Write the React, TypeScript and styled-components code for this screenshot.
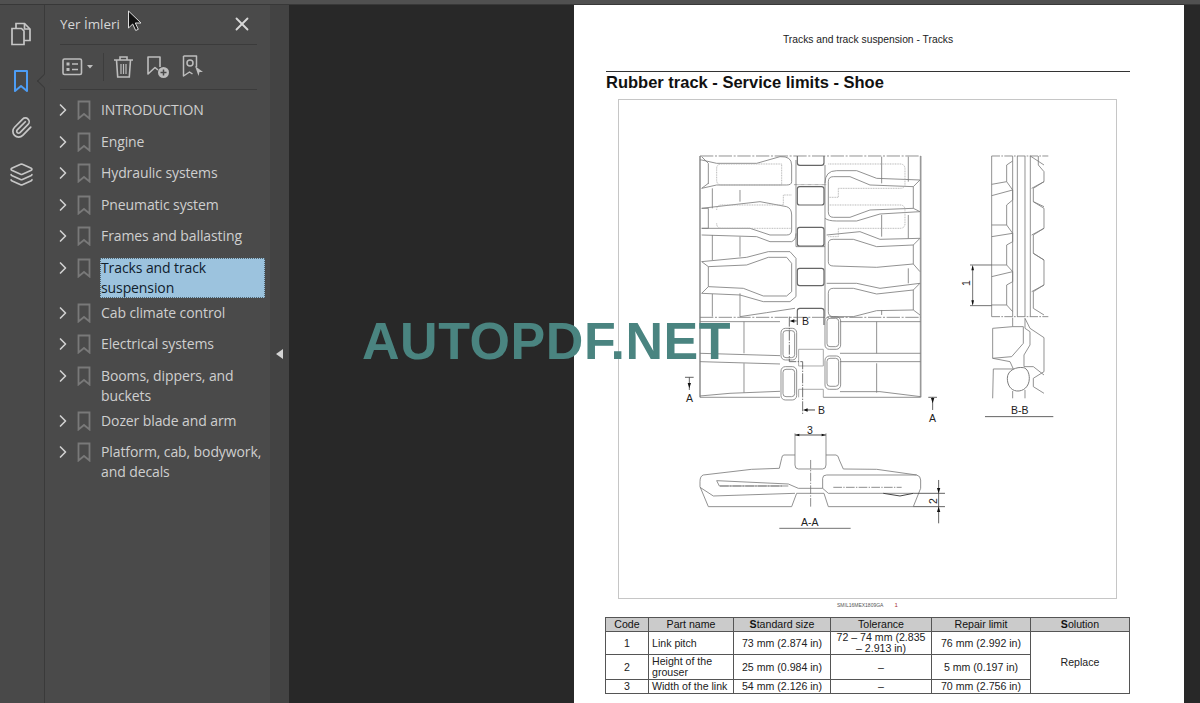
import React from 'react'
import styled, { createGlobalStyle } from 'styled-components'
import { ChevronRight, Layers, Paperclip, X } from 'lucide-react'

const bookmarks = [
  'INTRODUCTION',
  'Engine',
  'Hydraulic systems',
  'Pneumatic system',
  'Frames and ballasting',
  'Tracks and track suspension',
  'Cab climate control',
  'Electrical systems',
  'Booms, dippers, and buckets',
  'Dozer blade and arm',
  'Platform, cab, bodywork, and decals',
]

const limits = [
  { code: '1', name: 'Link pitch', std: '73 mm (2.874 in)', tol: '72 – 74 mm (2.835 – 2.913 in)', rep: '76 mm (2.992 in)', h: 23 },
  { code: '2', name: 'Height of the grouser', std: '25 mm (0.984 in)', tol: '–', rep: '5 mm (0.197 in)', h: 25 },
  { code: '3', name: 'Width of the link', std: '54 mm (2.126 in)', tol: '–', rep: '70 mm (2.756 in)', h: 14 },
]

const GlobalStyle = createGlobalStyle`
  html, body { margin: 0; padding: 0; height: 100%; overflow: hidden; background: #282828; }
  #root { height: 100%; }
`

const Shell = styled.div`
  position: relative;
  height: 703px;
  display: flex;
  flex-direction: column;
  overflow: hidden;
  font-family: "Open Sans", "Noto Sans", sans-serif;
`

const TopStrip = styled.div`
  flex: 0 0 auto;
  height: 4px;
  background: #505050;
  border-bottom: 1px solid #383838;
`

const Workspace = styled.div`
  flex: 1;
  min-height: 0;
  display: flex;
`

const Rail = styled.nav`
  flex: 0 0 44px;
  padding-top: 5px;
  background: #494949;
  border-right: 1px solid #3a3a3a;
  display: flex;
  flex-direction: column;
  align-items: center;
  color: #c6c6c6;
`

const RailItem = styled.div<{ $active?: boolean }>`
  position: relative;
  height: 47px;
  width: 44px;
  padding-right: 2px;
  box-sizing: border-box;
  display: flex;
  align-items: center;
  justify-content: center;
  color: ${(p) => (p.$active ? '#4d9df5' : '#c6c6c6')};

  ${(p) =>
    p.$active &&
    `&::after {
      content: '';
      position: absolute;
      right: -5px;
      top: 19px;
      width: 9px;
      height: 9px;
      background: #4a4a4a;
      border-left: 1px solid #3a3a3a;
      border-bottom: 1px solid #3a3a3a;
      transform: rotate(45deg);
    }`}
`

const Panel = styled.aside`
  flex: 0 0 225px;
  box-sizing: border-box;
  padding: 0 5px 0 15px;
  background: #4a4a4a;
  color: #d2d2d2;
`

const PanelHead = styled.div`
  height: 40px;
  margin-right: 8px;
  display: flex;
  align-items: center;
  justify-content: space-between;
  padding-right: 4px;
  padding-bottom: 2px;
  box-sizing: border-box;
  border-bottom: 1px solid #3b3b3b;
  font-size: 13.4px;
  color: #d6d6d6;
`

const CloseIcon = styled(X)`
  width: 22px;
  height: 22px;
  color: #d8d8d8;
`

const Toolbar = styled.div`
  height: 45px;
  margin-right: 8px;
  box-sizing: border-box;
  display: flex;
  align-items: center;
  padding-left: 2px;
  border-bottom: 1px solid #3b3b3b;
  color: #bdbdbd;
`

const ToolDivider = styled.span`
  width: 1px;
  height: 28px;
  margin: 0 9px 0 9px;
  background: #3d3d3d;
`

const ToolGap = styled.span`
  width: 12px;
`

const Tree = styled.ul`
  list-style: none;
  margin: 0;
  padding: 10px 0 0;
`

const TreeRow = styled.li`
  min-height: 31.5px;
  box-sizing: border-box;
  padding-bottom: 5px;
  display: flex;
  align-items: flex-start;
`

const Chevron = styled(ChevronRight)`
  flex: 0 0 auto;
  width: 20px;
  height: 20px;
  margin-left: -7px;
  color: #d0d0d0;
`

const MarkIcon = styled.svg`
  flex: 0 0 auto;
  width: 14px;
  height: 20px;
  margin: 0 9px 0 4px;
  color: #797979;
`

const RowLabel = styled.span<{ $selected?: boolean }>`
  flex: 1;
  padding-left: 1px;
  font-size: 14px;
  line-height: 20px;
  letter-spacing: -0.1px;
  color: ${(p) => (p.$selected ? '#10202c' : '#cfcfcf')};
  background: ${(p) => (p.$selected ? '#9cc3de' : 'transparent')};
  outline: ${(p) => (p.$selected ? '1px dotted #4f6470' : 'none')};
  outline-offset: -1px;
`

const CollapseStrip = styled.div`
  flex: 0 0 19px;
  background: #434343;
  display: flex;
  align-items: center;
  justify-content: center;
`

const CollapseArrow = styled.span`
  margin-top: -1px;
  width: 0;
  height: 0;
  border-top: 5px solid transparent;
  border-bottom: 5px solid transparent;
  border-right: 7px solid #d4d4d4;
`

const Canvas = styled.main`
  flex: 1;
  min-width: 0;
  background: #282828;
  padding-left: 285px;
  overflow: hidden;
`

const Sheet = styled.article`
  width: 610px;
  height: 698px;
  box-sizing: border-box;
  background: #fff;
  padding: 29px 54px 0 32px;
  color: #111;
  font-family: "Liberation Sans", Arial, sans-serif;
`

const RunningHead = styled.div`
  height: 12px;
  font-size: 10.3px;
  line-height: 12px;
  text-align: center;
  color: #222;
`

const TitleRule = styled.div`
  margin-top: 25px;
  border-top: 1px solid #333;
`

const Title = styled.h1`
  margin: 1px 0 0;
  font-size: 16.5px;
  line-height: 19px;
  font-weight: 700;
  color: #111;
`

const FigureFrame = styled.figure`
  margin: 7px 13px 0 12px;
  height: 500px;
  box-sizing: border-box;
  border: 1px solid #c6c6c6;
`

const Drawing = styled.svg`
  display: block;
  width: 100%;
  height: 100%;
`

const Caption = styled.div`
  margin-top: 2px;
  height: 8px;
  padding-left: 231px;
  display: flex;
  gap: 11px;
  font-size: 5px;
  line-height: 8px;
  color: #555;
`

const CaptionNumber = styled.span`
  color: #a33;
  font-size: 6px;
`

const LimitsTable = styled.table`
  margin-top: 8px;
  width: 524px;
  margin-left: -1px;
  table-layout: fixed;
  border-collapse: collapse;
  font-size: 10.6px;
  line-height: 11px;
  color: #222;
`

const HeadCell = styled.th`
  height: 13px;
  padding: 0;
  font-weight: 400;
  text-align: center;
  background: #cbcbcb;
  border: 1px solid #555;
  color: #111;
`

const LimitRow = styled.tr<{ $h: number }>`
  height: ${(p) => p.$h}px;
`

const Cell = styled.td<{ $left?: boolean }>`
  padding: 0 ${(p) => (p.$left ? '3px' : '4px')};
  text-align: ${(p) => (p.$left ? 'left' : 'center')};
  border: 1px solid #555;
`

const Watermark = styled.div`
  position: absolute;
  left: 362px;
  top: 311px;
  font-family: "Liberation Sans", Arial, sans-serif;
  font-size: 52px;
  line-height: 60px;
  font-weight: 700;
  letter-spacing: 0.55px;
  color: #4a8480;
  white-space: nowrap;
`

const Pointer = styled.svg`
  position: absolute;
  left: 127px;
  top: 10px;
  width: 16px;
  height: 22px;
`

function FilesIcon() {
  return (
    <svg width="22" height="24" viewBox="0 0 22 24" fill="none" stroke="currentColor" strokeWidth="1.7">
      <path d="M6 6V1.5h8.5l5.5 5.5v11.5h-6" />
      <path d="M14.5 1.5V7H20" />
      <path d="M2 6.5h9.5l2.5 2.5v13.5H2z" />
    </svg>
  )
}

function BookmarkIcon() {
  return (
    <svg width="16" height="24" viewBox="0 0 16 24" fill="none" stroke="currentColor" strokeWidth="2">
      <path d="M2 2h12v20l-6-5-6 5z" strokeLinejoin="round" />
    </svg>
  )
}

function ListPanelIcon() {
  return (
    <svg width="32" height="18" viewBox="0 0 32 18" fill="none" stroke="currentColor" strokeWidth="1.6">
      <rect x="1" y="1" width="18.5" height="15.5" rx="1.5" />
      <rect x="4.5" y="4.5" width="3" height="3" fill="currentColor" stroke="none" />
      <rect x="4.5" y="10" width="3" height="3" fill="currentColor" stroke="none" />
      <path d="M10 6h6M10 11.500h6" />
      <path d="M25 7h6l-3 3.500z" fill="currentColor" stroke="none" />
    </svg>
  )
}

function TrashIcon() {
  return (
    <svg width="21" height="24" viewBox="0 0 21 24" fill="none" stroke="currentColor" strokeWidth="1.6">
      <path d="M1 5h19M7 5V2h7v3" />
      <path d="M3.500 5l1.200 17h11.600l1.200-17" />
      <path d="M8 9v10M10.500 9v10M13 9v10" strokeWidth="1.200" />
    </svg>
  )
}

function BookmarkAddIcon() {
  return (
    <svg width="24" height="24" viewBox="0 0 24 24" fill="none" stroke="currentColor" strokeWidth="1.6">
      <path d="M12 15l-3-2.500-7 6.500V2h12v10" strokeLinejoin="round" />
      <circle cx="17.500" cy="17.500" r="5.500" fill="currentColor" stroke="none" />
      <path d="M17.500 14.500v6M14.500 17.500h6" stroke="#4a4a4a" strokeWidth="1.500" />
    </svg>
  )
}

function BookmarkRibbonIcon() {
  return (
    <svg width="22" height="24" viewBox="0 0 22 24" fill="none" stroke="currentColor" strokeWidth="1.500">
      <path d="M1.500 1h13v11M1.500 1v20l6-4 3 2" strokeLinejoin="round" />
      <circle cx="8" cy="8" r="3" />
      <path d="M13 11l8 6h-3.500l-1 4z" fill="currentColor" stroke="none" />
    </svg>
  )
}

function OutlineMark() {
  return (
    <MarkIcon viewBox="0 0 14 20" fill="none" stroke="currentColor" strokeWidth="1.800">
      <path d="M1.500 1.500h11v17l-5.500-4.500-5.500 4.500z" />
    </MarkIcon>
  )
}

function TrackDrawing() {
  return (
    <Drawing viewBox="619 100 497 498" fill="none" stroke="#7c7c7c" strokeWidth="0.7">
      {/* plan view, traced at 3x from (680,140) */}
      <g transform="translate(680 140) scale(0.3333)" strokeWidth="2.500">
        <path d="M60 48V772M722 48V772" stroke="#999" strokeWidth="5" />
        <path d="M60 48H722M60 532H722" strokeDasharray="40 5 6 5" strokeWidth="2.500" />
        <path d="M60 545H300M480 545H722M60 772H300M430 772H722" />
        {/* upper lugs, left */}
        <path d="M65 60L110 70H230L300 50Q335 48 335 75V125Q335 135 320 135H110L65 145M85 70V132" />
        <path d="M65 205L240 185L320 200Q335 205 335 225V270Q335 285 320 285H270L210 265L65 265M85 205V265" />
        <path d="M65 365L200 352L265 335H330L348 355V470L330 485H250L180 465L65 460" />
        <path d="M85 380L200 375L265 352H320L335 370V455L320 468H250L190 445L85 440V380M65 365L85 380M65 460L85 440" />
        <path d="M180 530L260 518L345 505" />
        <path d="M65 50L85 70M65 145L85 130M65 205L85 205M65 265L85 265" />
        {/* upper lugs, right */}
        <path d="M445 125Q445 110 460 110H510L570 135L700 140V205L570 210L510 232H460Q445 232 445 215Z" />
        <path d="M445 310Q445 298 460 298H520L590 320L700 315V372L590 382L460 378Q445 378 445 365Z" />
        <path d="M445 460Q445 445 460 445H520L590 462L700 450V510L590 512L520 530H460Q445 530 445 515Z" />
        <path d="M435 130Q435 92 470 92H530L590 115L720 120M435 235Q445 243 470 243H530L600 222L720 215M720 120L700 140M720 215L700 205" />
        <path d="M440 285L540 275L600 298L720 295M720 295L700 315M720 395L700 372M440 430H530L600 445L720 430M720 430L700 450M720 525L700 510" />
        <path d="M65 60H60M65 285L230 290L270 305H335Q348 300 348 280V60" />
        <path d="M435 75V530M348 280V320H435" />
        <path d="M97 145V205M97 285V360M97 462V530M180 150V185M180 290V350M180 460V530M605 50V130M605 225V290M605 510V525M685 50V125M685 225V295M685 385V430" />
        {/* hidden edges */}
        <path d="M110 85Q110 72 125 72H305V135H125Q110 135 110 120ZM110 210Q110 195 125 195H310V165H335M110 250Q110 265 125 265H335M445 72H660Q675 72 675 87V135Q675 145 660 145H475V172H445M445 195H660Q675 195 675 210V250Q675 265 660 265H475V290H445" strokeDasharray="3 2" stroke="#aaa" />
        {/* windows */}
        <path d="M352 48V68Q352 76 360 76H424Q432 76 432 68V48" strokeWidth="3.500" stroke="#666" />
        <rect x="352" y="140" width="80" height="55" rx="7" strokeWidth="3.500" stroke="#666" />
        <rect x="352" y="262" width="80" height="56" rx="7" strokeWidth="3.500" stroke="#666" />
        <rect x="352" y="385" width="80" height="52" rx="7" strokeWidth="3.500" stroke="#666" />
        <path d="M352 555V512Q352 505 360 505H424Q432 505 432 512V555" strokeWidth="3.500" stroke="#666" />
        <path d="M342 134H440" strokeDasharray="2 1.500" strokeWidth="3" />
        {/* lower lugs */}
        <path d="M60 640L300 647M60 665L300 672M60 768L150 760L300 754M480 640H722M480 665H722M480 755H600L722 770M192 545V640M192 670V758M590 545V640M590 670V758" />
        <rect x="303" y="565" width="47" height="95" rx="13" strokeWidth="2.500" />
        <rect x="309" y="572" width="35" height="81" rx="9" />
        <rect x="303" y="680" width="47" height="100" rx="13" strokeWidth="2.500" />
        <rect x="309" y="688" width="35" height="82" rx="9" />
        <rect x="435" y="530" width="47" height="98" rx="13" strokeWidth="2.500" />
        <rect x="441" y="535" width="35" height="85" rx="9" />
        <rect x="435" y="648" width="47" height="100" rx="13" strokeWidth="2.500" />
        <rect x="441" y="655" width="35" height="84" rx="9" />
        <path d="M356 678V628H430V678H356M356 772V748H430V772" stroke="#999" />
        {/* section marks */}
        <path d="M328 530V665H368V822" strokeDasharray="30 4 4 4" stroke="#555" />
        <path d="M350 543H336M405 810H376" stroke="#222" strokeWidth="2.500" />
        <path d="M329 543l14-5v10zM369 810l14-5v10z" fill="#111" stroke="none" />
        <path d="M15 712H41M28 712V750M745 772H771M758 772V810" stroke="#444" />
        <path d="M28 745l-5-16h10zM758 790l-5-16h10z" fill="#111" stroke="none" />
      </g>
      <g fill="#222" stroke="none" fontFamily="Liberation Sans, Arial, sans-serif" fontSize="10.500">
        <text x="802" y="325">B</text>
        <text x="818" y="414">B</text>
        <text x="686" y="402">A</text>
        <text x="929" y="422">A</text>
        <text x="807" y="434">3</text>
        <text x="801" y="526">A-A</text>
        <text x="1011" y="414">B-B</text>
        <text x="0" y="0" transform="translate(970 286) rotate(-90)">1</text>
        <text x="0" y="0" transform="translate(937 504) rotate(-90)">2</text>
      </g>
      {/* section B-B, traced at 3x from (970,145) */}
      <g transform="translate(970 145) scale(0.3333)" strokeWidth="2.500">
        <path d="M65 33H235M65 515H235" strokeDasharray="25 4 5 4" />
        <path d="M65 33V515M128 33V515M142 33V515M165 33V515M181 33V515" />
        <path d="M128 48L110 60V110L65 118M65 152L128 135L110 110M128 135V165L110 180V240L65 240M65 275L128 265L110 240M128 265V290L110 300V360L65 360M65 395L128 380L110 360M128 380V410L110 420V480L65 480M128 500L110 480" />
        <path d="M181 33L222 60M205 33V60L222 80V110L190 130V170L222 190M222 110L185 130M190 170L222 185M222 190V250L190 270V325L222 345M190 325L222 345M222 250L185 270M222 345V420L190 440V490L222 510M222 420L185 440" />
        <path d="M0 360H65M0 482H65M8 365V478" stroke="#555" />
        <path d="M8 360l-4 16h8zM8 482l-4-16h8z" fill="#111" stroke="none" />
        <path d="M68 550L128 545V518M128 545H160V595L125 635L68 640V550M68 640L120 650L130 672H70L68 760" />
        <path d="M165 520L180 550L222 578V680L190 700V725L222 745M165 520V550L180 560V600L162 630V665H190L222 690" />
        <path d="M112 700C112 675 140 665 160 668C172 670 178 685 178 700C178 725 160 740 140 738C122 736 112 720 112 700Z" strokeWidth="3" />
        <path d="M128 738V760M165 735V760" />
        <path d="M45 815H250" stroke="#444" />
      </g>
      {/* section A-A, traced at 3x from (680,400) */}
      <g transform="translate(680 400) scale(0.3333)" strokeWidth="2.500">
        <path d="M345 165H312Q306 165 305 175L298 205L215 208L70 225Q60 228 60 245V260L85 320H335L350 280H432L445 320H700L722 265V240Q722 228 710 225L590 208L490 207L478 180Q475 165 468 165H438" />
        <path d="M345 100V195Q345 207 355 207H428Q438 207 438 195V100" />
        <path d="M345 105H438" stroke="#333" />
        <path d="M346 105l12-4v8zM437 105l-12-4v8z" fill="#111" stroke="none" />
        <path d="M110 242L325 252L355 265H390L428 265V235Q428 225 440 225H710M110 242L118 258H325M428 265L445 280H700M60 262L100 288L345 280" />
        <path d="M120 258H310M460 262H665M392 180V320" strokeDasharray="26 4 4 4" stroke="#777" />
        <path d="M610 280L660 288L700 280" stroke="#444" strokeWidth="3" />
        <path d="M700 280H795M700 320H795M776 240V370" stroke="#444" />
        <path d="M776 280l-5-16h10zM776 320l-5 16h10z" fill="#111" stroke="none" />
        <path d="M298 385H512" stroke="#555" />
      </g>
    </Drawing>
  )
}

function App() {
  return (
    <Shell>
      <GlobalStyle />
      <TopStrip />
      <Workspace>
        <Rail>
          <RailItem><FilesIcon /></RailItem>
          <RailItem $active><BookmarkIcon /></RailItem>
          <RailItem><Paperclip size={23} strokeWidth={1.8} /></RailItem>
          <RailItem><Layers size={25} strokeWidth={1.6} /></RailItem>
        </Rail>
        <Panel>
          <PanelHead>
            Yer İmleri
            <CloseIcon strokeWidth={2} />
          </PanelHead>
          <Toolbar>
            <ListPanelIcon />
            <ToolDivider />
            <TrashIcon />
            <ToolGap />
            <BookmarkAddIcon />
            <ToolGap />
            <BookmarkRibbonIcon />
          </Toolbar>
          <Tree>
            {bookmarks.map((label) => (
              <TreeRow key={label}>
                <Chevron strokeWidth={2} />
                <OutlineMark />
                <RowLabel $selected={label.startsWith('Tracks')}>{label}</RowLabel>
              </TreeRow>
            ))}
          </Tree>
        </Panel>
        <CollapseStrip>
          <CollapseArrow />
        </CollapseStrip>
        <Canvas>
          <Sheet>
            <RunningHead>Tracks and track suspension - Tracks</RunningHead>
            <TitleRule />
            <Title>Rubber track - Service limits - Shoe</Title>
            <FigureFrame>
              <TrackDrawing />
            </FigureFrame>
            <Caption>
              <span>SMIL16MEX1809GA</span>
              <CaptionNumber>1</CaptionNumber>
            </Caption>
            <LimitsTable>
              <colgroup>
                <col style={{ width: 43 }} />
                <col style={{ width: 85 }} />
                <col style={{ width: 97 }} />
                <col style={{ width: 101 }} />
                <col style={{ width: 99 }} />
                <col style={{ width: 99 }} />
              </colgroup>
              <thead>
                <tr>
                  <HeadCell>Code</HeadCell>
                  <HeadCell>Part name</HeadCell>
                  <HeadCell><b>S</b>tandard size</HeadCell>
                  <HeadCell>Tolerance</HeadCell>
                  <HeadCell>Repair limit</HeadCell>
                  <HeadCell><b>S</b>olution</HeadCell>
                </tr>
              </thead>
              <tbody>
                {limits.map((row, i) => (
                  <LimitRow key={row.code} $h={row.h}>
                    <Cell>{row.code}</Cell>
                    <Cell $left>{row.name}</Cell>
                    <Cell>{row.std}</Cell>
                    <Cell>{row.tol}</Cell>
                    <Cell>{row.rep}</Cell>
                    {i === 0 && <Cell rowSpan={3}>Replace</Cell>}
                  </LimitRow>
                ))}
              </tbody>
            </LimitsTable>
          </Sheet>
        </Canvas>
      </Workspace>
      <Watermark>AUTOPDF.NET</Watermark>
      <Pointer viewBox="0 0 16 22">
        <path d="M1.500 1v17l4.200-4 3 6.500 2.600-1.200-3-6.300h5.700z" fill="#111" stroke="#ddd" strokeWidth="1" />
      </Pointer>
    </Shell>
  )
}

export default App
